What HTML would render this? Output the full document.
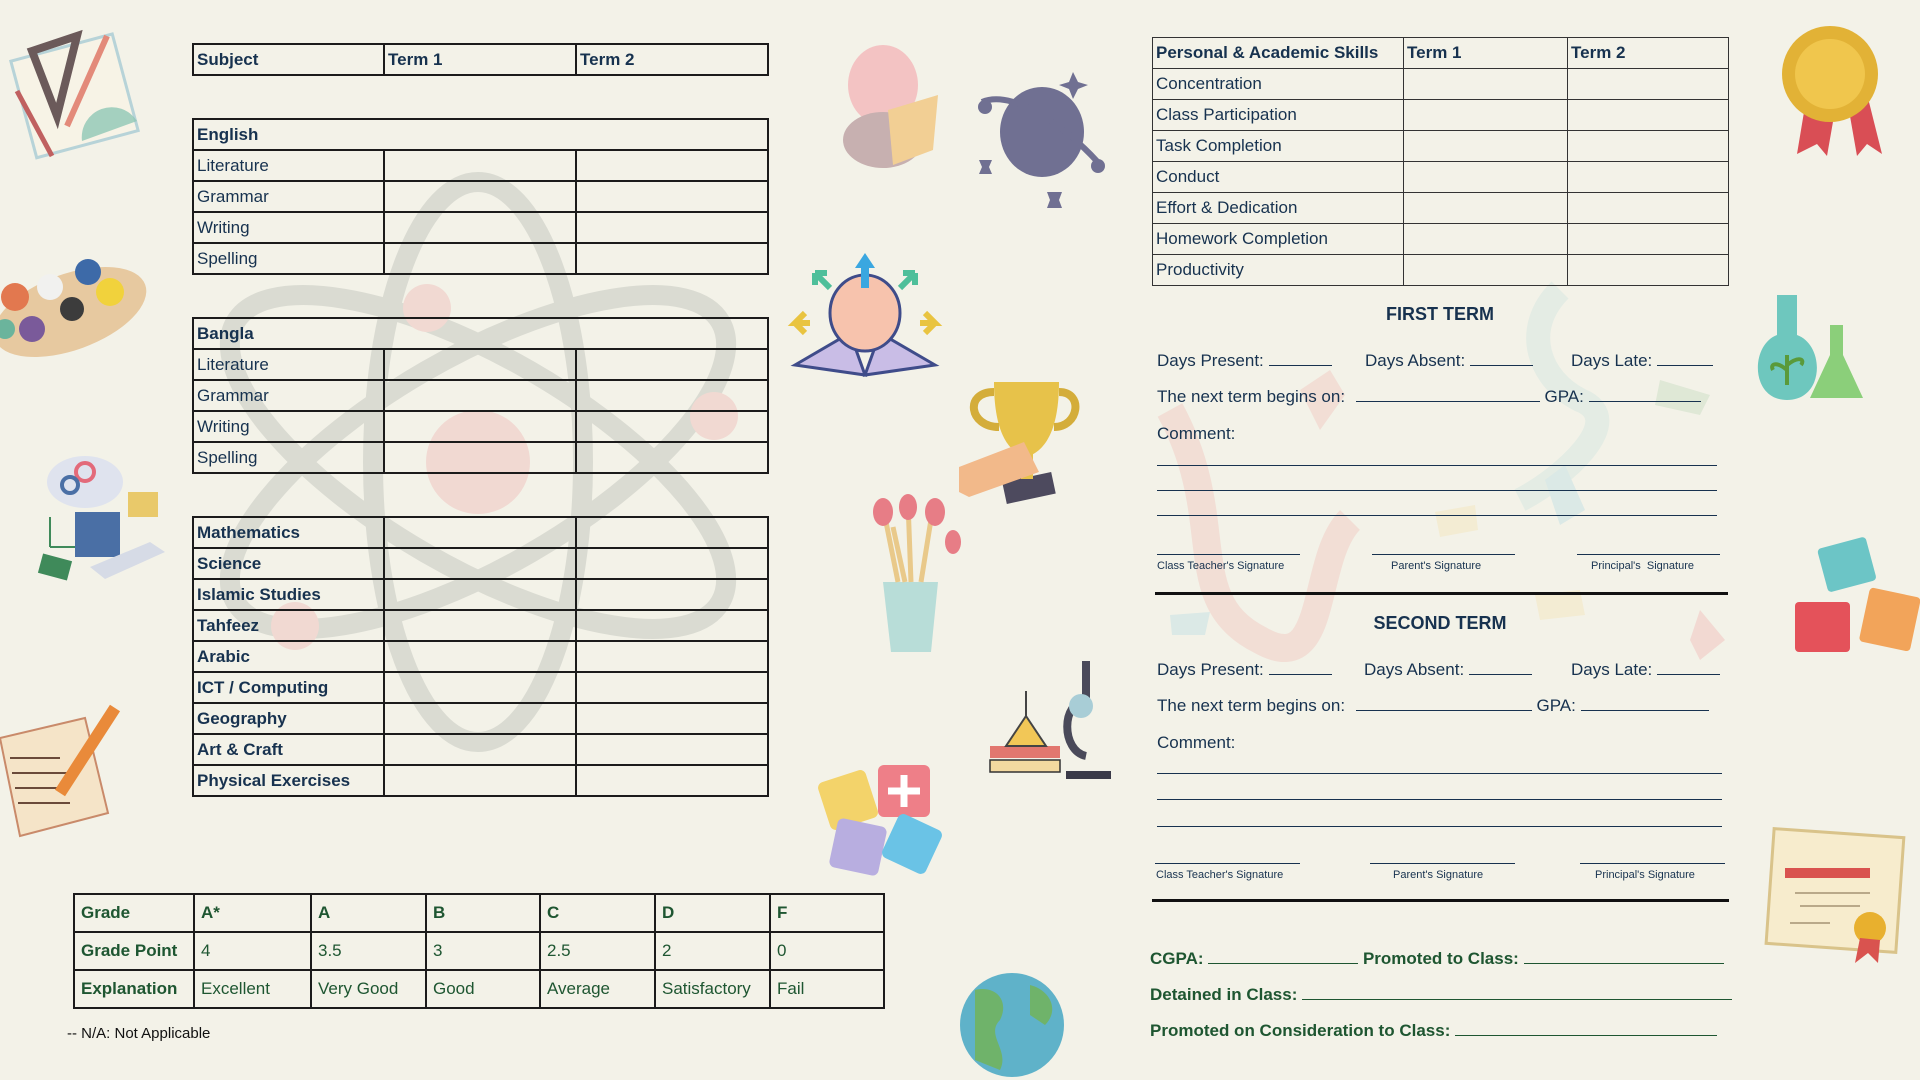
<!DOCTYPE html>
<html><head><meta charset="utf-8"><style>
*{margin:0;padding:0;box-sizing:border-box}
body{width:1920px;height:1080px;background:#f3f2e8;position:relative;overflow:hidden;font-family:"Liberation Sans",sans-serif;color:#17324f}
.a{position:absolute}
table{border-collapse:collapse;position:absolute;table-layout:fixed}
td{border:2px solid #1b1b1b;height:31px;font-size:17px;padding:0 3px;vertical-align:middle;white-space:nowrap;overflow:hidden}
.b{font-weight:bold}
.r td{border-width:1.5px;border-color:#333}
.g td{color:#1e5631;height:38px;padding:0 6px;font-size:17px}
.f{font-size:17px;white-space:nowrap}
.u{display:inline-block;border-bottom:1.6px solid #17324f;vertical-align:baseline;height:1px}
.ln{position:absolute;height:0;border-top:1.6px solid #17324f}
.sl{font-size:11px;position:absolute;white-space:nowrap}
.gr{color:#1e5631;font-weight:bold;font-size:17px;white-space:nowrap}
</style></head><body>

<svg class="a" style="left:0;top:0" width="1920" height="1080">
 <g fill="none" stroke="#dadbd2" stroke-width="20">
  <ellipse cx="478" cy="462" rx="105" ry="280"/>
  <ellipse cx="478" cy="462" rx="105" ry="280" transform="rotate(60 478 462)"/>
  <ellipse cx="478" cy="462" rx="105" ry="280" transform="rotate(-60 478 462)"/>
 </g>
 <circle cx="478" cy="462" r="52" fill="#f1d9d2"/>
 <circle cx="427" cy="308" r="24" fill="#f1d9d2"/>
 <circle cx="714" cy="416" r="24" fill="#f1d9d2"/>
 <circle cx="295" cy="626" r="24" fill="#f1d9d2"/>
 <path d="M1170 410 C1230 520 1180 600 1260 640 C1330 680 1310 560 1350 520" stroke="#f1d6cd" stroke-width="28" fill="none" opacity=".7"/>
 <path d="M1560 290 C1520 330 1540 380 1580 400 C1630 420 1560 480 1520 500" stroke="#dde9e3" stroke-width="24" fill="none" opacity=".7"/>
 <polygon points="1300,390 1330,370 1345,395 1320,430" fill="#f1d6cd" opacity=".7"/>
 <polygon points="1660,380 1710,395 1700,415 1655,405" fill="#dfe8d6"/>
 <polygon points="1545,480 1565,465 1585,510 1560,525" fill="#dbe9e6"/>
 <polygon points="1435,512 1475,505 1478,530 1440,537" fill="#f3ecd3"/>
 <polygon points="1700,610 1725,640 1700,660 1690,640" fill="#f2d9d2"/>
 <polygon points="1535,595 1580,590 1585,615 1540,620" fill="#f3ecd3"/>
 <polygon points="1170,615 1210,612 1205,635 1172,635" fill="#dbe9e6"/>

 <g transform="translate(12,31)">
  <rect x="10" y="15" width="105" height="100" fill="#f7f3e6" stroke="#b7d3d8" stroke-width="3" transform="rotate(-15 62 65)"/>
  <polygon points="20,20 65,5 45,85" fill="none" stroke="#6b5a5a" stroke-width="8"/>
  <line x1="55" y1="95" x2="95" y2="5" stroke="#e38a7a" stroke-width="6"/>
  <path d="M70 110 A30 30 0 0 1 125 90 Z" fill="#8fc7b5" opacity=".8"/>
  <line x1="5" y1="60" x2="40" y2="125" stroke="#c06060" stroke-width="5"/>
 </g>
 <g transform="translate(0,257)">
  <ellipse cx="70" cy="55" rx="80" ry="38" fill="#e7c9a0" transform="rotate(-20 70 55)"/>
  <circle cx="15" cy="40" r="14" fill="#e2784f"/><circle cx="50" cy="30" r="13" fill="#f1f1ef"/>
  <circle cx="88" cy="15" r="13" fill="#3d6aa8"/><circle cx="110" cy="35" r="14" fill="#f1d23c"/>
  <circle cx="72" cy="52" r="12" fill="#3c3c3c"/><circle cx="32" cy="72" r="13" fill="#7a5a9a"/>
  <circle cx="5" cy="72" r="10" fill="#6bb49c"/>
 </g>
 <g transform="translate(30,447)">
  <ellipse cx="55" cy="35" rx="38" ry="26" fill="#dfe3ee"/>
  <circle cx="55" cy="25" r="9" fill="none" stroke="#e36a7a" stroke-width="4"/>
  <circle cx="40" cy="38" r="8" fill="none" stroke="#4a6fa5" stroke-width="4"/>
  <rect x="45" y="65" width="45" height="45" fill="#4a6fa5"/>
  <rect x="98" y="45" width="30" height="25" fill="#e9c96a"/>
  <polygon points="60,120 120,95 135,105 75,132" fill="#d6dbe6"/>
  <rect x="10" y="110" width="30" height="20" fill="#3f8a5a" transform="rotate(15 25 120)"/>
  <path d="M20 70 V100 M20 100 H45" stroke="#3f8a5a" stroke-width="2" fill="none"/>
 </g>
 <g transform="translate(0,698)">
  <polygon points="0,40 85,20 108,115 20,138" fill="#f5e4c8" stroke="#c98a6a" stroke-width="2"/>
  <path d="M10 60 H60 M12 75 H70 M15 90 H65 M18 105 H70" stroke="#6a4a3a" stroke-width="2"/>
  <line x1="60" y1="95" x2="115" y2="10" stroke="#e98a3a" stroke-width="12"/>
 </g>
 <g transform="translate(833,40)">
  <ellipse cx="50" cy="45" rx="35" ry="40" fill="#f3c3c3"/>
  <ellipse cx="50" cy="100" rx="40" ry="28" fill="#c7b0b0"/>
  <polygon points="55,70 105,55 100,110 60,125" fill="#f2cf94"/>
 </g>
 <g transform="translate(977,67)" fill="#707092">
  <ellipse cx="65" cy="65" rx="42" ry="45"/>
  <path d="M5 35 C40 20 100 70 125 100" stroke="#707092" stroke-width="6" fill="none"/>
  <circle cx="8" cy="40" r="7"/><circle cx="121" cy="99" r="7"/>
  <polygon points="96,5 101,15 111,18 101,22 96,32 92,22 82,18 92,15"/>
  <polygon points="2,93 15,93 12,100 15,107 2,107 5,100"/>
  <polygon points="70,125 85,125 82,133 85,141 70,141 73,133"/>
 </g>
 <g transform="translate(790,253)">
  <polygon points="5,112 60,80 75,122" fill="#c9bde6" stroke="#3f4c8a" stroke-width="3"/>
  <polygon points="145,112 90,80 75,122" fill="#c9bde6" stroke="#3f4c8a" stroke-width="3"/>
  <ellipse cx="75" cy="60" rx="35" ry="38" fill="#f7c3ad" stroke="#3f4c8a" stroke-width="3"/>
  <path d="M75 0 L85 15 H79 V35 H71 V15 H65Z" fill="#3aa7e0"/>
  <path d="M20 70 H5 L15 60 M5 70 L15 80" stroke="#e9c440" stroke-width="6" fill="none"/>
  <path d="M130 70 H145 L135 60 M145 70 L135 80" stroke="#e9c440" stroke-width="6" fill="none"/>
  <path d="M40 35 L25 20 M25 20 V32 M25 20 H37" stroke="#4ebf9a" stroke-width="6" fill="none"/>
  <path d="M110 35 L125 20 M125 20 V32 M125 20 H113" stroke="#4ebf9a" stroke-width="6" fill="none"/>
 </g>
 <g transform="translate(959,362)">
  <path d="M35 20 H100 C100 70 85 90 67 95 C49 90 35 70 35 20Z" fill="#e7c24a"/>
  <path d="M35 30 C5 30 10 65 40 65 M100 30 C125 30 120 65 95 65" stroke="#d4ad3a" stroke-width="8" fill="none"/>
  <rect x="45" y="115" width="50" height="22" fill="#4d4a5e" transform="rotate(-12 70 126)"/>
  <rect x="62" y="92" width="12" height="25" fill="#e7c24a"/>
  <polygon points="0,130 0,105 65,80 80,110 10,135" fill="#f2b98a"/>
 </g>
 <g transform="translate(863,497)">
  <polygon points="20,85 75,85 68,155 28,155" fill="#b8ddd8"/>
  <path d="M35 85 L20 10 M48 85 L45 5 M58 85 L70 10 M42 85 L30 30" stroke="#e9c98a" stroke-width="5"/>
  <ellipse cx="20" cy="15" rx="10" ry="14" fill="#e77d86"/><ellipse cx="45" cy="10" rx="9" ry="13" fill="#e77d86"/>
  <ellipse cx="72" cy="15" rx="10" ry="14" fill="#e77d86"/><ellipse cx="90" cy="45" rx="8" ry="12" fill="#e77d86"/>
 </g>
 <g transform="translate(986,661)">
  <rect x="4" y="85" width="70" height="12" fill="#e2776f"/>
  <rect x="4" y="99" width="70" height="12" fill="#f3d9a0" stroke="#333" stroke-width="1.5"/>
  <path d="M40 30 V55 L60 85 H20 L40 55Z" fill="#f2c757" stroke="#444" stroke-width="2"/>
  <path d="M100 0 V40 C75 40 75 90 100 95" stroke="#4a4a5a" stroke-width="8" fill="none"/>
  <circle cx="95" cy="45" r="12" fill="#a8cdd6"/>
  <rect x="80" y="110" width="45" height="8" fill="#3a3a48"/>
 </g>
 <g transform="translate(818,760)">
  <rect x="5" y="15" width="50" height="50" rx="6" fill="#f3d36a" transform="rotate(-18 30 40)"/>
  <rect x="60" y="5" width="52" height="52" rx="6" fill="#ee7f88"/>
  <rect x="15" y="62" width="50" height="50" rx="6" fill="#b8aee0" transform="rotate(12 40 87)"/>
  <rect x="70" y="60" width="48" height="48" rx="6" fill="#6ac3e6" transform="rotate(25 94 84)"/>
  <path d="M86 15 V47 M70 31 H102" stroke="#fff" stroke-width="7"/>
 </g>
 <circle cx="1012" cy="1025" r="52" fill="#5fb2c9"/>
 <path d="M975 990 C995 985 1010 1000 1000 1020 C985 1035 1010 1050 1000 1070 L975 1060Z M1030 985 C1050 990 1060 1010 1045 1025 L1030 1015Z" fill="#6fb36a"/>
 <g transform="translate(1782,24)">
  <polygon points="25,70 15,130 35,120 45,132 55,75" fill="#d94e55"/>
  <polygon points="65,75 75,132 85,120 100,130 85,70" fill="#d94e55"/>
  <circle cx="48" cy="50" r="48" fill="#e2b236"/>
  <circle cx="48" cy="50" r="35" fill="#f0c64d"/>
 </g>
 <g transform="translate(1755,290)">
  <path d="M22 5 H42 V45 C70 55 70 110 32 110 C-5 110 -5 55 22 45Z" fill="#6ec7be"/>
  <path d="M75 35 H88 V65 L108 108 H55 L75 65Z" fill="#8bcf7a"/>
  <path d="M32 95 V65 M32 80 C20 70 15 75 18 80 M32 75 C45 65 50 70 46 75" stroke="#5a9a3a" stroke-width="4" fill="none"/>
 </g>
 <g transform="translate(1792,537)">
  <rect x="30" y="5" width="50" height="45" rx="4" fill="#6cc5c6" transform="rotate(-15 55 28)"/>
  <rect x="3" y="65" width="55" height="50" rx="4" fill="#e4525a"/>
  <rect x="72" y="55" width="52" height="55" rx="4" fill="#f2a45a" transform="rotate(12 98 82)"/>
 </g>
 <g transform="translate(1760,828)">
  <rect x="10" y="5" width="130" height="115" fill="#f7eccd" stroke="#d9c38a" stroke-width="3" transform="rotate(4 75 62)"/>
  <rect x="25" y="40" width="85" height="10" fill="#d9534f"/>
  <path d="M35 65 H110 M40 78 H100 M30 95 H70" stroke="#b9a98a" stroke-width="2"/>
  <circle cx="110" cy="100" r="16" fill="#e8b02e"/>
  <polygon points="100,110 95,135 108,125 118,135 120,112" fill="#d9534f"/>
 </g>
</svg>

<table style="left:192px;top:43px;width:575px" ><colgroup><col style="width:191px"><col style="width:192px"><col style="width:192px"></colgroup>
<tr><td class="b">Subject</td><td class="b">Term 1</td><td class="b">Term 2</td></tr></table>

<table style="left:192px;top:118px;width:575px"><colgroup><col style="width:191px"><col style="width:192px"><col style="width:192px"></colgroup>
<tr><td class="b" colspan="3">English</td></tr>
<tr><td>Literature</td><td></td><td></td></tr>
<tr><td>Grammar</td><td></td><td></td></tr>
<tr><td>Writing</td><td></td><td></td></tr>
<tr><td>Spelling</td><td></td><td></td></tr></table>

<table style="left:192px;top:317px;width:575px"><colgroup><col style="width:191px"><col style="width:192px"><col style="width:192px"></colgroup>
<tr><td class="b" colspan="3">Bangla</td></tr>
<tr><td>Literature</td><td></td><td></td></tr>
<tr><td>Grammar</td><td></td><td></td></tr>
<tr><td>Writing</td><td></td><td></td></tr>
<tr><td>Spelling</td><td></td><td></td></tr></table>

<table style="left:192px;top:516px;width:575px"><colgroup><col style="width:191px"><col style="width:192px"><col style="width:192px"></colgroup>
<tr><td class="b">Mathematics</td><td></td><td></td></tr>
<tr><td class="b">Science</td><td></td><td></td></tr>
<tr><td class="b">Islamic Studies</td><td></td><td></td></tr>
<tr><td class="b">Tahfeez</td><td></td><td></td></tr>
<tr><td class="b">Arabic</td><td></td><td></td></tr>
<tr><td class="b">ICT / Computing</td><td></td><td></td></tr>
<tr><td class="b">Geography</td><td></td><td></td></tr>
<tr><td class="b">Art &amp; Craft</td><td></td><td></td></tr>
<tr><td class="b">Physical Exercises</td><td></td><td></td></tr></table>

<table class="g" style="left:73px;top:893px;width:810px"><colgroup><col style="width:120px"><col style="width:117px"><col style="width:115px"><col style="width:114px"><col style="width:115px"><col style="width:115px"><col style="width:114px"></colgroup>
<tr><td class="b">Grade</td><td class="b">A*</td><td class="b">A</td><td class="b">B</td><td class="b">C</td><td class="b">D</td><td class="b">F</td></tr>
<tr><td class="b">Grade Point</td><td>4</td><td>3.5</td><td>3</td><td>2.5</td><td>2</td><td>0</td></tr>
<tr><td class="b">Explanation</td><td>Excellent</td><td>Very Good</td><td>Good</td><td>Average</td><td>Satisfactory</td><td>Fail</td></tr></table>
<div class="a" style="left:67px;top:1025px;font-size:15px;color:#111">-- N/A: Not Applicable</div>

<table class="r" style="left:1152px;top:37px;width:576px"><colgroup><col style="width:251px"><col style="width:164px"><col style="width:161px"></colgroup>
<tr><td class="b">Personal &amp; Academic Skills</td><td class="b">Term 1</td><td class="b">Term 2</td></tr>
<tr><td>Concentration</td><td></td><td></td></tr>
<tr><td>Class Participation</td><td></td><td></td></tr>
<tr><td>Task Completion</td><td></td><td></td></tr>
<tr><td>Conduct</td><td></td><td></td></tr>
<tr><td>Effort &amp; Dedication</td><td></td><td></td></tr>
<tr><td>Homework Completion</td><td></td><td></td></tr>
<tr><td>Productivity</td><td></td><td></td></tr></table>

<div class="a b" style="left:1340px;width:200px;text-align:center;top:304px;font-size:18px">FIRST TERM</div>
<div class="a f" style="left:1157px;top:351px">Days Present: <span class="u" style="width:63px"></span></div>
<div class="a f" style="left:1365px;top:351px">Days Absent: <span class="u" style="width:63px"></span></div>
<div class="a f" style="left:1571px;top:351px">Days Late: <span class="u" style="width:56px"></span></div>
<div class="a f" style="left:1157px;top:387px">The next term begins on: <span class="u" style="width:184px;margin-left:6px"></span> GPA: <span class="u" style="width:112px"></span></div>
<div class="a f" style="left:1157px;top:424px">Comment:</div>
<div class="ln" style="left:1157px;width:560px;top:465px"></div>
<div class="ln" style="left:1157px;width:560px;top:490px"></div>
<div class="ln" style="left:1157px;width:560px;top:515px"></div>
<div class="ln" style="left:1157px;width:143px;top:554px"></div>
<div class="ln" style="left:1372px;width:143px;top:554px"></div>
<div class="ln" style="left:1577px;width:143px;top:554px"></div>
<div class="sl" style="left:1157px;top:560px">Class Teacher's Signature</div>
<div class="sl" style="left:1391px;top:560px">Parent's Signature</div>
<div class="sl" style="left:1591px;top:560px">Principal's &nbsp;Signature</div>
<div class="a" style="left:1155px;width:573px;top:592px;height:3px;background:#111"></div>

<div class="a b" style="left:1340px;width:200px;text-align:center;top:613px;font-size:18px">SECOND TERM</div>
<div class="a f" style="left:1157px;top:660px">Days Present: <span class="u" style="width:63px"></span></div>
<div class="a f" style="left:1364px;top:660px">Days Absent: <span class="u" style="width:63px"></span></div>
<div class="a f" style="left:1571px;top:660px">Days Late: <span class="u" style="width:63px"></span></div>
<div class="a f" style="left:1157px;top:696px">The next term begins on: <span class="u" style="width:176px;margin-left:6px"></span> GPA: <span class="u" style="width:128px"></span></div>
<div class="a f" style="left:1157px;top:733px">Comment:</div>
<div class="ln" style="left:1157px;width:565px;top:773px"></div>
<div class="ln" style="left:1157px;width:565px;top:799px"></div>
<div class="ln" style="left:1157px;width:565px;top:826px"></div>
<div class="ln" style="left:1155px;width:145px;top:863px"></div>
<div class="ln" style="left:1370px;width:145px;top:863px"></div>
<div class="ln" style="left:1580px;width:145px;top:863px"></div>
<div class="sl" style="left:1156px;top:869px">Class Teacher's Signature</div>
<div class="sl" style="left:1393px;top:869px">Parent's Signature</div>
<div class="sl" style="left:1595px;top:869px">Principal's Signature</div>
<div class="a" style="left:1152px;width:577px;top:899px;height:3px;background:#111"></div>

<div class="a gr" style="left:1150px;top:949px">CGPA: <span class="u" style="width:150px;border-color:#1e5631"></span> Promoted to Class: <span class="u" style="width:200px;border-color:#1e5631"></span></div>
<div class="a gr" style="left:1150px;top:985px">Detained in Class: <span class="u" style="width:430px;border-color:#1e5631"></span></div>
<div class="a gr" style="left:1150px;top:1021px">Promoted on Consideration to Class: <span class="u" style="width:262px;border-color:#1e5631"></span></div>
</body></html>
